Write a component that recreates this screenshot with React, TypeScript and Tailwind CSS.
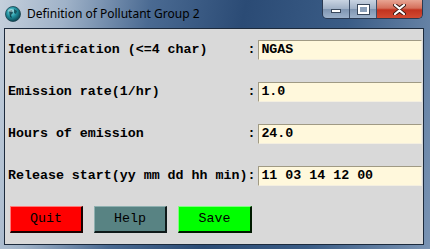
import React from "react"

const rows = [
    { label: "Identification (<=4 char)", value: "NGAS" },
    { label: "Emission rate(1/hr)", value: "1.0" },
    { label: "Hours of emission", value: "24.0" },
    { label: "Release start(yy mm dd hh min)", value: "11 03 14 12 00" },
]

function AppIcon() {
    return (
        <svg width="16" height="16" viewBox="0 0 16 16">
            <defs>
                <radialGradient id="globe" cx="0.4" cy="0.35" r="0.7">
                    <stop offset="0" stopColor="#7fe3ea" />
                    <stop offset="0.5" stopColor="#1f8e9c" />
                    <stop offset="1" stopColor="#0b3a48" />
                </radialGradient>
            </defs>
            <circle cx="8" cy="8" r="7.5" fill="url(#globe)" stroke="#17404c" strokeWidth="0.8" />
            <path d="M4 5 L7 4 L8 7 L6 9 L7 12 L5 11 Z" fill="#0d3440" opacity="0.8" />
            <path d="M9 3 L12 5 L11 8 L9 7 Z" fill="#0d3440" opacity="0.7" />
            <ellipse cx="6" cy="4.5" rx="3" ry="1.6" fill="#ffffff" opacity="0.35" />
        </svg>
    )
}

function CaptionButtons() {
    return (
        <div className="flex h-[19px] ml-auto mr-[7px] border border-t-0 border-[#2a3a52] rounded-b-[5px] overflow-hidden">
            <div className="w-[27px] h-full flex items-center justify-center bg-[linear-gradient(180deg,#c9d4e2_0%,#9fb0c6_50%,#7f95b1_51%,#9cb1ca_100%)] border-r border-[#3c4e68]">
                <div className="w-[10px] h-[4px] bg-white border border-[#39485c] mt-[4px]" />
            </div>
            <div className="w-[27px] h-full flex items-center justify-center bg-[linear-gradient(180deg,#c9d4e2_0%,#9fb0c6_50%,#7f95b1_51%,#9cb1ca_100%)] border-r border-[#3c4e68]">
                <div className="w-[11px] h-[9px] border-[2px] border-white outline outline-1 outline-[#39485c] bg-[#8a9fb9]" />
            </div>
            <div className="w-[45px] h-full flex items-center justify-center bg-[linear-gradient(180deg,#e8a593_0%,#d5705c_45%,#c2331f_55%,#d24a32_100%)]">
                <svg width="13" height="11" viewBox="0 0 13 11">
                    <path d="M2 1 L6.5 4.5 L11 1 M2 10 L6.5 6.5 L11 10" stroke="#3a1a14" strokeWidth="4" fill="none" strokeLinecap="round" />
                    <path d="M2 1 L6.5 4.5 L11 1 M2 10 L6.5 6.5 L11 10" stroke="#ffffff" strokeWidth="2.2" fill="none" strokeLinecap="round" />
                </svg>
            </div>
        </div>
    )
}

export default function App() {
    return (
        <div className="w-[430px] h-[249px] flex flex-col bg-[linear-gradient(100deg,#c5d0dc_0%,#9fb2c8_14%,#4a6a92_32%,#2b4b75_52%,#3a5c86_74%,#7a94b4_100%)] overflow-hidden">
            {/* Title bar */}
            <div className="h-[28px] flex items-start shrink-0">
                <div className="flex items-center h-[28px] pl-[5px] gap-[6px] pb-[1px]">
                    <AppIcon />
                    <span className="font-['Noto_Sans',sans-serif] text-[12px] text-black">
                        Definition of Pollutant Group 2
                    </span>
                </div>
                <CaptionButtons />
            </div>

            {/* Client area */}
            <div className="ml-[4px] mr-[6px] mb-[4px] flex-1 bg-[#d9d9d9] border border-[#1c2a3c] font-['Liberation_Mono',monospace] text-[13.3px] text-black">
                <div className="flex flex-col gap-[22px] pt-[11px] pl-[3px] pr-[1px]">
                    {rows.map((row) => (
                        <div key={row.label} className="flex items-center h-[20px]">
                            <span className="w-[240px] font-bold whitespace-pre">{row.label}</span>
                            <span className="w-[11px] font-bold">:</span>
                            <div className="w-[164px] h-[20px] bg-[#fff8dc] border border-t-[#a09a84] border-l-[#a09a84] border-b-[#f4efe0] border-r-[#f4efe0] flex items-center pl-[2px] font-bold">
                                {row.value}
                            </div>
                        </div>
                    ))}
                </div>
                <div className="flex gap-[11px] pl-[5px] mt-[20px]">
                    <button className="w-[73px] h-[27px] bg-[#ff0000] border border-t-[#ff7a7a] border-l-[#ff7a7a] border-b-2 border-r-2 border-b-[#1a0000] border-r-[#1a0000] text-[13.3px]">
                        Quit
                    </button>
                    <button className="w-[73px] h-[27px] bg-[#588383] border border-t-[#8fb0b0] border-l-[#8fb0b0] border-b-2 border-r-2 border-b-[#0f1a1a] border-r-[#0f1a1a] text-[13.3px]">
                        Help
                    </button>
                    <button className="w-[74px] h-[27px] bg-[#00ff00] border border-t-[#80ff80] border-l-[#80ff80] border-b-2 border-r-2 border-b-[#001a00] border-r-[#001a00] text-[13.3px]">
                        Save
                    </button>
                </div>
            </div>
        </div>
    )
}
